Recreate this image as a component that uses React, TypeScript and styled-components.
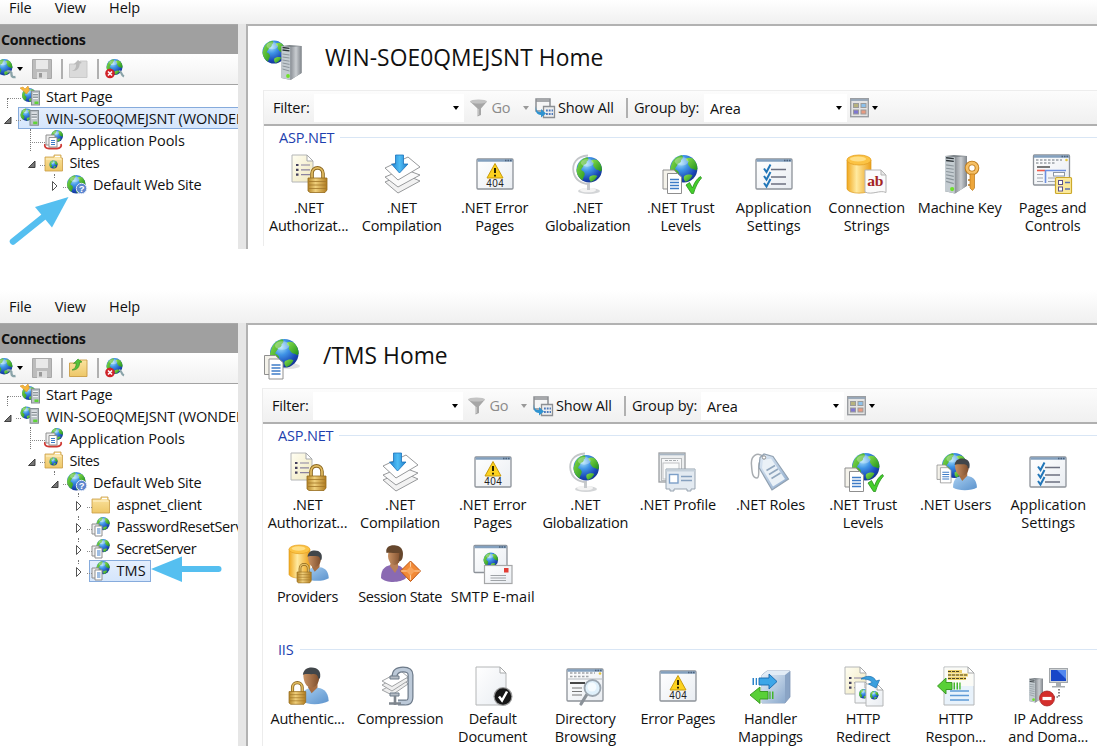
import React from "react";
import styled, { createGlobalStyle, css } from "styled-components";

const Global = createGlobalStyle`
  *, *::before, *::after { box-sizing: border-box; }
  html, body { margin: 0; padding: 0; background: #fff; overflow: hidden; }
  body { font-family: "Open Sans", "Noto Sans", sans-serif; font-size: 14.5px; letter-spacing: -0.18px; color: #111; }
  svg { display: block; flex: none; overflow: visible; }
`;

/* ---------- shared paint ---------- */

const Hidden = styled.svg`
  position: absolute;
`;

const Defs = () => (
  <Hidden width="0" height="0" aria-hidden>
    <defs>
      <radialGradient id="sea" cx="0.38" cy="0.28" r="0.8">
        <stop offset="0" stopColor="#a9e2fb" />
        <stop offset="0.35" stopColor="#3f93e6" />
        <stop offset="0.75" stopColor="#1a47b5" />
        <stop offset="1" stopColor="#123087" />
      </radialGradient>
      <linearGradient id="land" x1="0" y1="0" x2="1" y2="1">
        <stop offset="0" stopColor="#8ae04c" />
        <stop offset="1" stopColor="#1e8f1c" />
      </linearGradient>
      <linearGradient id="gold" x1="0" x2="1">
        <stop offset="0" stopColor="#b5862a" />
        <stop offset="0.4" stopColor="#f0d07c" />
        <stop offset="1" stopColor="#b07b1f" />
      </linearGradient>
      <linearGradient id="amber" x1="0" x2="1">
        <stop offset="0" stopColor="#f0a71e" />
        <stop offset="0.4" stopColor="#ffeaa0" />
        <stop offset="1" stopColor="#eca01a" />
      </linearGradient>
      <linearGradient id="steel" x1="0" x2="1">
        <stop offset="0" stopColor="#8b9096" />
        <stop offset="0.5" stopColor="#c9cdd1" />
        <stop offset="1" stopColor="#80858b" />
      </linearGradient>
      <linearGradient id="paper" x1="0" y1="0" x2="1" y2="1">
        <stop offset="0" stopColor="#ffffff" />
        <stop offset="1" stopColor="#e9edf2" />
      </linearGradient>
      <linearGradient id="cream" x1="0" y1="0" x2="1" y2="1">
        <stop offset="0" stopColor="#fffef2" />
        <stop offset="1" stopColor="#efe7bd" />
      </linearGradient>
      <linearGradient id="shirt" x1="0" y1="0" x2="1" y2="1">
        <stop offset="0" stopColor="#a9d0f2" />
        <stop offset="1" stopColor="#5b92cc" />
      </linearGradient>
      <linearGradient id="skin" x1="0" x2="1">
        <stop offset="0" stopColor="#c99264" />
        <stop offset="1" stopColor="#7d4d2c" />
      </linearGradient>
      <linearGradient id="manila" x1="0" y1="0" x2="0" y2="1">
        <stop offset="0" stopColor="#fbe3a0" />
        <stop offset="1" stopColor="#edc768" />
      </linearGradient>
      <linearGradient id="down" x1="0" x2="1">
        <stop offset="0" stopColor="#1f82cf" />
        <stop offset="0.5" stopColor="#4fbdf5" />
        <stop offset="1" stopColor="#1e7cc8" />
      </linearGradient>
      <linearGradient id="cube" x1="0" y1="0" x2="1" y2="1">
        <stop offset="0" stopColor="#e3edf7" />
        <stop offset="1" stopColor="#8ba9cc" />
      </linearGradient>
    </defs>
  </Hidden>
);

type P = { x?: number; y?: number; s?: number };
const at = ({ x = 0, y = 0, s = 1 }: P) => `translate(${x} ${y}) scale(${s})`;

/* Parts that several icons are put together from */

const Globe = (p: P) => (
  <g transform={at(p)}>
    <circle cx="10" cy="10" r="10" fill="url(#sea)" />
    <path
      d="M1 7C2 3.500 5 .9 8.600 .2 10 1.200 9.500 2.800 8 3.600 8.500 5 7 6 5.800 6.200 5.400 8 4 8.800 3.600 10.200 5.600 11 7.200 12.600 6.200 14.600 5.600 16 5 17 4.800 18.400 2 16.800.2 13.600 0 10.400Z"
      fill="url(#land)"
    />
    <path
      d="M12 2.400C13.500 1.600 15.400 1.900 16.600 2.600 18.800 4.600 20 7.200 20 10 19.500 11.600 18.200 11.500 17.600 10.400 16.400 10.400 14.600 9.600 14 8 12.800 7.400 13 5.600 13.600 5 12 4.400 11.200 3.400 12 2.400Z"
      fill="url(#land)"
    />
    <path d="M10.500 15.400C12.500 14 15.500 14 16.400 15 15 17.800 13.200 19 11.400 19.600 10 18.400 9.600 16.600 10.500 15.400Z" fill="url(#land)" />
    <ellipse cx="8.500" cy="4.600" rx="5" ry="3" fill="#fff" opacity="0.3" />
  </g>
);

const Server = (p: P) => (
  <g transform={at(p)}>
    <path d="M0 1L8 0 20 1V28L9 35 0 33Z" fill="#7e858a" />
    <path d="M0 1L9 2V35L0 33Z" fill="#c4ccd1" />
    <path d="M9 2L20 1V28L9 35Z" fill="url(#steel)" />
    <path d="M1 2.500L8 3.300M1 5L8 5.800" stroke="#2d3438" strokeWidth="1.300" />
    <path d="M1 9L8 10M1 12L8 13M1 15L8 16.200M1 18L8 19.400M1 21L8 22.600M1 24L8 26" stroke="#8b959b" strokeWidth="1" />
    <circle cx="6.500" cy="31" r="1.900" fill="#6fe02a" />
  </g>
);

const MiniServer = (p: P) => (
  <g transform={at(p)}>
    <rect x="0.500" y="0.500" width="8" height="14" fill="#bcc3c8" stroke="#858d93" />
    <path d="M2 3H7M2 5.500H7M2 8H7" stroke="#eef1f3" strokeWidth="1.200" />
    <path d="M2 4.200H7M2 6.700H7" stroke="#6d757b" strokeWidth="0.700" />
    <rect x="3.500" y="11" width="4" height="2.500" fill="#5fd336" />
  </g>
);

const Lock = (p: P) => (
  <g transform={at(p)}>
    <path d="M4 13V7.500C4 0 15 0 15 7.500V13" fill="none" stroke="#8d6820" strokeWidth="3.600" />
    <path d="M4 13V7.500C4 0 15 0 15 7.500V13" fill="none" stroke="#e2bd63" strokeWidth="1.700" />
    <path d="M0 12H19V24L17 26.500H2L0 25Z" fill="url(#gold)" stroke="#94691a" strokeWidth="0.800" />
    <path d="M1 15.500H18M1 19H18M1 22.500H18" stroke="#a2772a" strokeWidth="0.800" />
  </g>
);

const Page = ({ w = 20, h = 26, fill = "url(#paper)", ...p }: P & { w?: number; h?: number; fill?: string }) => (
  <g transform={at(p)}>
    <path d={`M0 0H${w - 6}L${w} 6V${h}H0Z`} fill={fill} stroke="#b4b6b7" strokeWidth="1" />
    <path d={`M${w - 6} 0V6H${w}Z`} fill="#fff" stroke="#a7a9aa" strokeWidth="1" />
  </g>
);

const Docs = (p: P) => (
  <g transform={at(p)}>
    <path d="M0 0H11L14 3V19H0Z" fill="#f4f2ea" stroke="#8f8f8f" />
    <path d="M4.500 3.500H14.500L18.500 7V23.500H4.500Z" fill="#fff" stroke="#8f8f8f" />
    <path d="M7 9.500H16M7 12.500H16M7 15.500H16M7 18.500H16" stroke="#3e7cc7" strokeWidth="1.400" />
  </g>
);

const Win = ({ w = 36, h = 30, ...p }: P & { w?: number; h?: number }) => (
  <g transform={at(p)}>
    <rect x="0" y="0" width={w} height={h} rx="1" fill="url(#paper)" stroke="#8d9299" strokeWidth="1.300" />
    <path d={`M.5 1.500H${w - 0.5}`} stroke="#83a0be" strokeWidth="2.600" />
    <path d={`M${w - 8} 1.500H${w - 1.5}`} stroke="#4c617b" strokeWidth="1.300" strokeDasharray="1.500 1" />
  </g>
);

const Man = (p: P) => (
  <g transform={at(p)}>
    <path d="M0 28C0 19 5 17 10 16.500 18 16 23 19 23.500 28 18 31.500 5 31.500 0 28Z" fill="url(#shirt)" />
    <path d="M6 16.500L9 21.500 14 16.500V12H7Z" fill="#a66d42" />
    <path d="M2 7C2 1 5 .5 8.500 .5 13 .5 16 3 15.500 8 15 14 12 16.500 8.500 16.500 4.500 16.500 2.500 12 2 7Z" fill="url(#skin)" />
    <path d="M1.600 6C2 1.500 5-.5 9-.5 14.500-.5 17.500 3 16 9L14.500 9C14.500 6 13 5 9 5.200 6 5.200 3 4.600 1.600 6Z" fill="#41464a" />
  </g>
);

const Cylinder = (p: P) => (
  <g transform={at(p)}>
    <path d="M0 5V34C2 39.500 22 39.500 24 34V5Z" fill="url(#amber)" stroke="#dd9b1c" strokeWidth="0.700" />
    <ellipse cx="12" cy="5" rx="12" ry="5" fill="#fbc344" stroke="#e5a021" strokeWidth="0.800" />
    <ellipse cx="11" cy="4" rx="8" ry="2.500" fill="#ffdf86" />
  </g>
);

const Warn404 = () => (
  <>
    <Win x={2} y={5} />
    <path d="M20 9.500L28 24H12Z" fill="#fcd21f" stroke="#c99b0c" strokeWidth="1" strokeLinejoin="round" />
    <path d="M20 14V19M20 20.800V22.500" stroke="#2a2300" strokeWidth="2" />
    <text x="20.300" y="33.300" textAnchor="middle" fontFamily="Liberation Sans, sans-serif" fontSize="10" letterSpacing="0.500" fill="#222">404</text>
  </>
);

const Bullets = (p: P) => (
  <g transform={at(p)}>
    <path d="M0 0H2.500M0 4.800H2.500M0 9.600H2.500" stroke="#45415e" strokeWidth="2.200" />
    <path d="M5 0H14M5 4.800H14M5 9.600H14" stroke="#8a829f" strokeWidth="1.200" />
  </g>
);

/* ---------- 40 x 40 feature icons ---------- */

const glyphs: Record<string, React.ReactNode> = {
  authorization: (
    <>
      <Page x={3} y={1} w={21} h={27} fill="url(#cream)" />
      <Bullets x={7} y={11} />
      <Lock x={19} y={12} />
    </>
  ),
  compilation: (
    <>
      <path d="M3 28L22 20 38 27 16 39Z" fill="#f2f2f2" stroke="#97999b" />
      <path d="M3 23L22 15 38 21 16 33Z" fill="#fafafa" stroke="#97999b" />
      <path d="M3 14L26 3 38 13 16 26Z" fill="#fff" stroke="#97999b" />
      <path d="M13.500 1H21.500V10H26L17.500 19 9.500 10H13.500Z" fill="url(#down)" stroke="#1c74bd" strokeWidth="0.800" />
    </>
  ),
  error: <Warn404 />,
  globalization: (
    <>
      <ellipse cx="21" cy="37" rx="11" ry="3" fill="#d3d5d7" />
      <ellipse cx="20" cy="36" rx="8" ry="2.300" fill="#f3f3f3" />
      <path d="M19 29H22V36H19Z" fill="#c6c9cc" />
      <path d="M20 1.500C8 2 4 10 5.500 18 7 25.500 13 30 21 30" fill="none" stroke="#c3c6c9" strokeWidth="1.800" />
      <Globe x={8.500} y={3} s={1.270} />
    </>
  ),
  trust: (
    <>
      <Globe x={9} y={1} s={1.370} />
      <Docs x={2} y={16} />
      <path d="M25 31L28.500 28.500 31.500 34C33 29 36 24.500 39.500 22.500L40.500 24C37 27.500 34 34 32.500 39.500H30.500Z" fill="#45ce2c" stroke="#27911a" strokeWidth="0.800" />
    </>
  ),
  settings: (
    <>
      <Win x={2} y={5} />
      <path d="M17 15.500H32M17 23H32M17 30H32" stroke="#6c7080" strokeWidth="1.300" />
      <path d="M10 14.500L12.500 18 16.500 10.500M10 22L12.500 25.500 16.500 18M10 29L12.500 32.500 16.500 25" fill="none" stroke="#2176b8" strokeWidth="2" />
    </>
  ),
  strings: (
    <>
      <Cylinder x={0} y={1} />
      <path d="M18 16H34L39 21V38.500C33 35.500 25 41.500 18 38Z" fill="#fbfbfb" stroke="#b5b5b5" />
      <path d="M34 16V21H39Z" fill="#e9e9e9" stroke="#b5b5b5" />
      <text x="28.300" y="32" textAnchor="middle" fontFamily="Liberation Serif, serif" fontWeight="700" fontSize="15.500" fill="#a32525">ab</text>
    </>
  ),
  machinekey: (
    <>
      <Server x={5} y={1} s={1.100} />
      <circle cx="32" cy="14" r="5" fill="none" stroke="#b97719" strokeWidth="4.600" />
      <circle cx="32" cy="14" r="5" fill="none" stroke="#f6c065" strokeWidth="2.800" />
      <path d="M30 20H34.500V34L32.500 36.500 30 34Z" fill="#eda63b" stroke="#b97719" strokeWidth="0.700" />
      <path d="M30 26H28M30 31H28" stroke="#b97719" strokeWidth="1.600" />
    </>
  ),
  pages: (
    <>
      <Win x={0.500} y={1} w={36} h={30} />
      <path d="M3 6H29M3 9H22" stroke="#9aa0a6" strokeWidth="1.600" strokeDasharray="2.500 1.500" />
      <circle cx="33.500" cy="6" r="1.300" fill="#e5c53a" />
      <path d="M4 13H17" stroke="#333" strokeWidth="1.300" />
      <path d="M4 16.500H12" stroke="#ef5a4a" strokeWidth="1.600" />
      <path d="M12 16.500H33M12.500 16V29" stroke="#6c8fe0" strokeWidth="1.600" />
      <path d="M4 20.500H10M4 24H10M4 27.500H10M15 24H22M15 27.500H22" stroke="#a3a8b0" strokeWidth="1.200" />
      <rect x="20.500" y="18.500" width="11" height="3.500" fill="#fff" stroke="#8b96a5" />
      <rect x="22.500" y="23.500" width="16" height="16" rx="1" fill="#fbe99a" stroke="#cda92b" strokeWidth="1.200" />
      <rect x="25.500" y="26.500" width="4" height="4" fill="#fff" stroke="#5c5088" />
      <rect x="25.500" y="33" width="4" height="4" fill="#fff" stroke="#5c5088" />
      <path d="M32 28.500H37M32 35H37" stroke="#5c6fb0" strokeWidth="1.300" />
    </>
  ),
  profile: (
    <>
      <rect x="1" y="1" width="26" height="29" fill="#eceeef" stroke="#9a9da0" strokeWidth="1.300" />
      <path d="M1 2.500H27" stroke="#a8b6c4" strokeWidth="1.600" />
      <rect x="3.500" y="6.500" width="20" height="22" fill="#f6f7f8" stroke="#b6b9bb" />
      <path d="M7 8.500H20" stroke="#a9adb0" strokeWidth="1.200" strokeDasharray="3 1" />
      <rect x="5" y="11" width="16" height="16" fill="#fafbfb" stroke="#bfc2c4" />
      <path d="M8 17H37V37H33V39H29V37H16V39H12V37H8Z" fill="#e3eaf1" stroke="#97a3af" />
      <path d="M8 18.500H37" stroke="#c5d0da" strokeWidth="2" />
      <rect x="11.500" y="22.500" width="8.500" height="8.500" fill="#fff" stroke="#7c9fc8" strokeWidth="1.400" />
      <path d="M23 24.500H34M23 28.500H34" stroke="#86a0be" strokeWidth="1.500" />
    </>
  ),
  roles: (
    <>
      <path d="M14 5C7-1 .5 4 1.500 13 2 21 2.500 26 7 26 10 25.500 8 19 9 12 10 7 13 4 16 4" fill="none" stroke="#a9adb1" strokeWidth="1.500" />
      <path d="M10 5.500L14 2 23 4.500 38.500 27 22 38 9 15.500Z" fill="url(#cube)" stroke="#91a1b1" strokeWidth="1.200" />
      <path d="M13 8L21 6.500 35 27 23 34.500 12 16Z" fill="#eaf1f7" />
      <path d="M16.500 18.500L25 13.500M19 22.500L28 17M21.500 26.500L30.500 21" stroke="#91a7be" strokeWidth="1.600" />
      <circle cx="14" cy="5.500" r="1.700" fill="#fff" stroke="#8d8d8d" />
    </>
  ),
  users: (
    <>
      <Globe x={6} y={1} s={1.250} />
      <Docs x={1} y={13} s={0.760} />
      <Man x={17} y={7} s={1.020} />
    </>
  ),
  providers: (
    <>
      <Cylinder x={1} y={1} s={0.870} />
      <Man x={18} y={7} s={0.970} />
      <Lock x={9} y={19} s={0.750} />
    </>
  ),
  session: (
    <>
      <path d="M1 34C1 24 6 21.500 13 20.500 21 21 25 24 26 34 21 39 6 39.500 1 34Z" fill="#8a6ab2" />
      <path d="M11 17H18V24L15 29 10 22Z" fill="#b98058" />
      <ellipse cx="14.500" cy="12" rx="6.500" ry="9" fill="url(#skin)" />
      <path d="M6.500 9C5 2.500 11 .5 16 1.500 22.500 2.500 24 8 22.500 14 21.500 17 20 17.500 18.500 17L19.500 9C15 9.500 9 8 6.500 9Z" fill="#66472d" />
      <path d="M30.500 17L40.500 27 30.500 37.500 20.500 27Z" fill="#f28a37" stroke="#bf5512" />
      <path d="M30.500 18V36M21 27H40" stroke="#ffd2a4" strokeWidth="1.100" />
      <path d="M30.500 22.500L35 27 30.500 31.500 26 27Z" fill="#f8a55d" />
    </>
  ),
  smtp: (
    <>
      <Win x={1} y={1.500} w={33} h={27} />
      <Globe x={10.500} y={8.500} s={0.730} />
      <rect x="11.500" y="21.500" width="27.500" height="18" fill="url(#paper)" stroke="#a6a7a8" strokeWidth="1.200" />
      <rect x="31" y="24" width="4.500" height="4.500" fill="#e23d35" />
      <path d="M17.500 31.500H33M17.500 34H33M17.500 36.500H33" stroke="#9fa3a7" strokeWidth="1" />
    </>
  ),
  authentication: (
    <>
      <Man x={13} y={2} s={1.180} />
      <Lock x={1} y={15} s={0.880} />
    </>
  ),
  compression: (
    <>
      <path d="M2 24L23 13 28 18 12 29Z" fill="#eee" stroke="#a2a4a6" />
      <path d="M2 19L22 8 29 14 12 25Z" fill="#eee" stroke="#a2a4a6" />
      <path d="M2 15L21 5 28 11 12 20.500Z" fill="#fff" stroke="#a2a4a6" />
      <path d="M14.500 11C14.500 4.500 19 3.500 23 3.500 28 3.500 30.500 5 30.500 9V31C30.500 36 28 37 24 36.500L18 36.500" fill="none" stroke="#6d7a89" strokeWidth="6" />
      <path d="M14.500 11C14.500 4.500 19 3.500 23 3.500 28 3.500 30.500 5 30.500 9V31C30.500 36 28 37 24 36.500L18 36.500" fill="none" stroke="#bcc9d8" strokeWidth="3.600" />
      <path d="M10 10H19V13H10ZM10 27H19V30H10Z" fill="#b6bdc5" stroke="#6d7a89" />
      <path d="M15 30V39M9 37.500H21" stroke="#7f868e" strokeWidth="2.600" />
    </>
  ),
  defaultdoc: (
    <>
      <Page x={3} y={1} w={30} h={38} />
      <circle cx="30" cy="30.500" r="9.500" fill="#9b9b9b" />
      <circle cx="30" cy="30.500" r="8.300" fill="#151515" />
      <path d="M26 30.500L29 34.500 34 25.500" fill="none" stroke="#fff" strokeWidth="2.500" />
    </>
  ),
  directory: (
    <>
      <Win x={2} y={3} w={36} h={32} />
      <path d="M5 7H30M5 10.500H25" stroke="#a0a4a9" strokeWidth="1.600" strokeDasharray="2.500 1.500" />
      <circle cx="35" cy="7.500" r="1.300" fill="#e5c53a" />
      <path d="M2 13H38" stroke="#b5bac0" />
      <path d="M5 17H20" stroke="#333" strokeWidth="1.800" />
      <path d="M7 22H17M7 25.500H17M7 29H17" stroke="#777" strokeWidth="1.200" />
      <path d="M21.500 29L16 38" stroke="#8b9299" strokeWidth="3.200" strokeLinecap="round" />
      <circle cx="27.500" cy="22" r="8" fill="#dff0fb" stroke="#9ba5af" strokeWidth="1.800" />
      <circle cx="27" cy="21" r="4.500" fill="#fff" opacity="0.700" />
    </>
  ),
  handler: (
    <>
      <path d="M12 9L17 5H40V31L35 37H12Z" fill="#8aa4c5" stroke="#7f96b5" strokeWidth="0.800" />
      <path d="M12 9H35V37H12Z" fill="url(#cube)" />
      <path d="M12 9L17 5H40L35 9Z" fill="#e2ecf6" />
      <path d="M9 12H19V8L27 15.500 19 23V19H9Z" fill="#3da6e8" stroke="#1567ad" strokeWidth="0.900" />
      <path d="M2.500 12H4V19H2.500ZM5.700 12H7V19H5.700Z" fill="#2a82c9" />
      <path d="M18 25.500H10V21L0 29 10 37.500V33H18Z" fill="#59d038" stroke="#32931c" strokeWidth="0.900" />
      <path d="M19.300 25.500H20.600V33H19.300ZM22 25.500H23.500V33H22Z" fill="#43b52a" />
    </>
  ),
  redirect: (
    <>
      <Page x={2} y={1} w={21} h={27} fill="url(#cream)" />
      <Bullets x={6} y={12} />
      <Page x={12} y={16} w={16} h={21} />
      <Globe x={16} y={23} s={0.480} />
      <Page x={23} y={18} w={17} h={22} />
      <Globe x={27} y={25} s={0.420} />
      <path d="M18 13C24 8.500 31 10 33 15L36.500 14 33 22 25.500 18 29 16.500C27.500 13.500 23 13 18 13Z" fill="#3ba0de" stroke="#1a6eae" strokeWidth="0.700" />
    </>
  ),
  response: (
    <>
      <Page x={8} y={1} w={30} h={38} fill="#e8f2fb" />
      <path d="M8.500 1.500H32L37.500 7V20H8.500Z" fill="#fbfbf6" />
      <path d="M32 1V7H38Z" fill="#fff" stroke="#a7a9aa" />
      <path d="M12 5.500H26M12 9H32M12 12.500H30" stroke="#ecd06a" strokeWidth="2.800" />
      <path d="M12 5.500H24M12 9H32M12 12.500H30" stroke="#4c4526" strokeWidth="1" strokeDasharray="3 1" />
      <path d="M14 25H33M14 29.500H33M14 34H33" stroke="#5e9ad6" strokeWidth="1.500" />
      <path d="M16 16.500H10V12L1.500 20 10 28V23.500H16Z" fill="#59d038" stroke="#32931c" strokeWidth="0.900" />
      <path d="M17.500 16.500H19V23.500H17.500ZM20.500 16.500H22V23.500H20.500ZM23.300 16.500H24.600V23.500H23.300Z" fill="#43b52a" />
    </>
  ),
  ipdomain: (
    <>
      <Server x={1} y={12} s={0.700} />
      <rect x="21.500" y="2.500" width="18" height="14" fill="#cfd3d6" stroke="#a3a7ab" />
      <rect x="23" y="4" width="15" height="11" fill="#1746c8" />
      <path d="M29 4H38V13Z" fill="#5287ef" />
      <path d="M28 17H33V20H37V21.500H24V20H28Z" fill="#a8adb1" />
      <path d="M31 23V31H26" fill="none" stroke="#333" strokeWidth="1.200" strokeDasharray="1.500 1.500" />
      <circle cx="19" cy="32.500" r="7.500" fill="#d42f2c" stroke="#9f1d1c" strokeWidth="0.700" />
      <path d="M14.500 32.500H23.500" stroke="#fff" strokeWidth="3.200" />
    </>
  ),
  site: (
    <>
      <ellipse cx="27" cy="27" rx="11" ry="3" fill="#000" opacity="0.120" />
      <Globe x={8} y={0} s={1.430} />
      <Docs x={2.500} y={16.500} />
    </>
  ),
  server: (
    <>
      <Globe x={0.500} y={0.500} s={1.150} />
      <Server x={19.500} y={5} s={1} />
    </>
  ),
};

const Feature = ({ name }: { name: string }) => (
  <svg width="40" height="40" viewBox="0 0 40 40">{glyphs[name]}</svg>
);

/* ---------- 20 x 20 tree and toolbar icons ---------- */

const Folder = () => (
  <>
    <path d="M1 4H10V2H17V5H18.500V18H1Z" fill="url(#manila)" stroke="#c99c45" strokeWidth="0.800" />
    <path d="M11 3.500H16" stroke="#fff" strokeWidth="1.200" />
    <path d="M2 6H17.500" stroke="#fff3ce" strokeWidth="1" />
  </>
);

const small: Record<string, React.ReactNode> = {
  start: (
    <>
      <Globe x={2} y={2} s={0.700} />
      <path d="M0 2L3 1 5 3 8 0 9.500 4 6.500 8 3 4.500Z" fill="#f6b53a" stroke="#d38a16" strokeWidth="0.500" />
      <MiniServer x={11} y={4.500} />
    </>
  ),
  server: (
    <>
      <Globe x={0.500} y={0.500} s={0.620} />
      <MiniServer x={9.500} y={2} s={1.050} />
    </>
  ),
  pools: (
    <>
      <Globe x={7} y={0} s={0.600} />
      <path d="M1 14C0 17 2 18.500 5 18.500H13C16 18.500 18 16.500 17 14" fill="none" stroke="#cf3a35" strokeWidth="1.800" />
      <path d="M2 5H11V15H2Z" fill="#eee" stroke="#909090" />
      <path d="M5 7.500H13V17H5Z" fill="#fff" stroke="#909090" />
      <path d="M7 10.500H11M7 12.500H11M7 14.500H11" stroke="#3e7cc7" />
    </>
  ),
  sites: (
    <>
      <Folder />
      <Globe x={5.500} y={7.500} s={0.400} />
    </>
  ),
  web: (
    <>
      <Globe x={0} y={0} s={0.920} />
      <circle cx="14.500" cy="13.500" r="5.200" fill="#5d86cf" stroke="#dfe7f5" strokeWidth="1" />
      <text x="14.500" y="17" textAnchor="middle" fontFamily="Liberation Sans, sans-serif" fontWeight="700" fontSize="9.500" fill="#fff">?</text>
    </>
  ),
  folder: <Folder />,
  app: (
    <>
      <Globe x={5.500} y={0} s={0.660} />
      <path d="M1 7H8V17H1Z" fill="#eee" stroke="#8d8d8d" />
      <path d="M4 9H11V19H4Z" fill="#fff" stroke="#8d8d8d" />
      <path d="M6 12H9.500M6 14H9.500M6 16H9.500" stroke="#3e7cc7" />
    </>
  ),
  connect: (
    <>
      <Globe x={0} y={0} s={0.820} />
      <path d="M11 13C13 11 16 13 15.500 15.500 15.500 17.500 17 18.500 19.500 18" fill="none" stroke="#8ba4a9" strokeWidth="2.400" />
    </>
  ),
  disconnect: (
    <>
      <Globe x={1.500} y={0} s={0.800} />
      <path d="M14 12C17 12 15.500 16 19 17.500" fill="none" stroke="#8ba4a9" strokeWidth="2.200" />
      <circle cx="5" cy="14.500" r="4.800" fill="#cf2228" />
      <path d="M3 12.500L7 16.500M7 12.500L3 16.500" stroke="#fff" strokeWidth="1.600" />
    </>
  ),
  floppy: (
    <>
      <path d="M0.500 0.500H19.500V19.500H0.500Z" fill="#bcbcbc" stroke="#a8a8a8" />
      <rect x="4" y="1" width="12" height="9" fill="#e9e9e9" />
      <rect x="5" y="13" width="10" height="7" fill="#dedede" />
      <rect x="7" y="14" width="3" height="4.500" fill="#9a9a9a" />
    </>
  ),
  up: (
    <>
      <path d="M0.500 5H11V2H18V18.500H0.500Z" fill="url(#manila)" stroke="#c99c45" strokeWidth="0.900" />
      <path d="M3 12C6 11 7.500 8 7 5L4.500 5.500 9 1 13 4 10.500 4.500C11 8.500 8 12.500 3 12Z" fill="#53c13b" stroke="#2f8c1d" strokeWidth="0.600" />
    </>
  ),
  upOff: (
    <>
      <path d="M0.500 5H11V2H18V18.500H0.500Z" fill="#dadada" stroke="#c6c6c6" strokeWidth="0.900" />
      <path d="M3 12C6 11 7.500 8 7 5L4.500 5.500 9 1 13 4 10.500 4.500C11 8.500 8 12.500 3 12Z" fill="#bababa" />
    </>
  ),
  funnel: (
    <>
      <path d="M1 3.500H18L12 10.500V17L8.500 18.500V10.500Z" fill="#a6a6a6" />
      <ellipse cx="9.500" cy="3.500" rx="8.500" ry="2" fill="#c3c3c3" />
      <path d="M9 11V17" stroke="#d5d5d5" strokeWidth="1.200" />
    </>
  ),
  showall: (
    <>
      <path d="M1 1H15V13H1Z" fill="#f6f6f6" stroke="#8c8f93" strokeWidth="1.500" />
      <path d="M1 3H15" stroke="#8c8f93" strokeWidth="1.500" />
      <path d="M8.500 8.500H19.500V19.500H8.500Z" fill="#eee" stroke="#8c8f93" strokeWidth="1.300" />
      <path d="M11 12.500H18M11 16H18" stroke="#4d7abb" strokeWidth="1.800" strokeDasharray="1.800 1" />
      <path d="M1 8C1 12 2 14 6 14V11L11 15.500 6 19.500V17C1.500 17 0 13 1 8Z" fill="#2f93d0" />
    </>
  ),
  view: (
    <>
      <rect x="0.700" y="0.700" width="17.600" height="18" fill="#e4e4e4" stroke="#9b9ea2" strokeWidth="1.400" />
      <path d="M1 2H18" stroke="#93a3b5" strokeWidth="1.800" />
      <rect x="3.500" y="5.500" width="5" height="4" fill="#b6b27e" stroke="#9a9a9a" />
      <rect x="11" y="5.500" width="5" height="4" fill="#8cc0ea" stroke="#9a9a9a" />
      <rect x="3.500" y="12" width="5" height="4" fill="#7f77d2" stroke="#9a9a9a" />
      <rect x="11" y="12" width="5" height="4" fill="#e89a80" stroke="#9a9a9a" />
    </>
  ),
};

const Small = ({ name }: { name: string }) => (
  <svg width="20" height="20" viewBox="0 0 20 20">{small[name]}</svg>
);

/* ---------- layout ---------- */

const Screen = styled.div`
  display: flex;
  flex-direction: column;
  gap: 41px;
  width: 1097px;
  height: 746px;
  background: #fff;
`;

const Manager = styled.section<{ $height: number }>`
  position: relative;
  display: flex;
  flex-direction: column;
  flex: none;
  height: ${(p) => p.$height}px;
  overflow: hidden;
`;

const MenuBar = styled.nav<{ $height: number }>`
  display: flex;
  flex: none;
  align-items: flex-end;
  gap: 23px;
  height: ${(p) => p.$height}px;
  padding: 0 0 8px 9px;
  line-height: 17px;
  letter-spacing: -0.08px;
  background: linear-gradient(#fff, #f0f0f0);
`;

const MenuItem = styled.span``;

const Workspace = styled.div`
  display: flex;
  flex: 1;
  min-height: 0;
  background: #e6e6e6;
`;

const Sidebar = styled.aside`
  width: 238px;
  flex: none;
  overflow: hidden;
  background: #fff;
`;

const SideTitle = styled.h2`
  height: 30px;
  margin: 0;
  padding-left: 1px;
  border-top: 1px solid #a9a9a9;
  background: #a0a0a0;
  font-size: 14.3px;
  font-weight: 700;
  letter-spacing: -0.35px;
  line-height: 30px;
`;

const SideTools = styled.div`
  display: flex;
  align-items: center;
  height: 31px;
  border-bottom: 1px solid #a3a3a3;
  background: linear-gradient(#fff, #f1f1f1);
  & > svg:first-child { margin-left: -4px; }
`;

const Caret = styled.i<{ $dim?: boolean; $l?: number; $r?: number }>`
  flex: none;
  width: 0;
  height: 0;
  margin: 0 ${(p) => p.$r ?? 0}px 0 ${(p) => p.$l ?? 0}px;
  border: 3.5px solid transparent;
  border-top: 4px solid ${(p) => (p.$dim ? "#999" : "#000")};
  border-bottom: 0;
`;

const Divider = styled.i<{ $l: number; $r: number }>`
  flex: none;
  width: 2px;
  height: 20px;
  margin: 0 ${(p) => p.$r}px 0 ${(p) => p.$l}px;
  background: #b0b0b0;
`;

const Tree = styled.ul<{ $top: number }>`
  margin: ${(p) => p.$top}px 0 0;
  padding: 0;
  list-style: none;
`;

const TreeRow = styled.li<{ $depth: number; $h: number }>`
  position: relative;
  display: flex;
  align-items: center;
  height: ${(p) => p.$h}px;
  padding-left: ${(p) => 3 + p.$depth * 23.5}px;
  white-space: nowrap;
`;

const Expander = styled.span`
  display: flex;
  flex: none;
  width: 15px;
  padding-top: 3px;
`;

const Node = styled.span<{ $on?: boolean; $wide?: boolean; $ls?: number }>`
  position: relative;
  display: flex;
  align-items: center;
  gap: 6px;
  flex: ${(p) => (p.$wide ? "1 0 auto" : "none")};
  height: 22px;
  padding: 0 4px 0 1px;
  border: 1px solid transparent;
  letter-spacing: ${(p) => p.$ls ?? -0.18}px;
  ${(p) =>
    p.$on &&
    css`
      border-color: #86abdc;
      background: linear-gradient(#e4eefd, #d5e6fc);
    `}
`;

const Lead = styled.i<{ $w: number }>`
  position: absolute;
  right: calc(100% - 2px);
  top: 12px;
  width: ${(p) => p.$w}px;
  border-top: 1px dotted #8a8a8a;
`;

const Trunk = styled.i<{ $x: number; $top: number; $h: number }>`
  position: absolute;
  left: ${(p) => p.$x}px;
  top: ${(p) => p.$top}px;
  height: ${(p) => p.$h}px;
  border-left: 1px dotted #777;
`;

const Content = styled.main`
  flex: 1;
  min-width: 0;
  margin-left: 8px;
  border: solid #b2b2b2;
  border-width: 2px 0 0 2px;
  background: #fff;
  padding-left: 14px;
`;

const PageHead = styled.header<{ $gap: number; $h: number }>`
  display: flex;
  align-items: center;
  gap: ${(p) => p.$gap}px;
  height: ${(p) => p.$h}px;
  padding-top: 4px;
`;

const PageTitle = styled.h1`
  margin: 0 0 6px;
  font-size: 22.8px;
  font-weight: 400;
  letter-spacing: 0.05px;
  white-space: nowrap;
`;

const Board = styled.div<{ $l: number }>`
  margin-left: ${(p) => p.$l}px;
  border-left: 1px solid #ececec;
`;

const FilterBar = styled.div`
  display: flex;
  align-items: center;
  height: 36px;
  border-top: 1px solid #ededed;
  border-bottom: 2px solid #b0b0b0;
  background: linear-gradient(#fcfcfc, #f0f0f0);
  white-space: nowrap;
`;

const BarText = styled.span<{ $w: number; $dim?: boolean; $pad?: number }>`
  flex: none;
  width: ${(p) => p.$w}px;
  padding-left: ${(p) => p.$pad ?? 0}px;
  color: ${(p) => (p.$dim ? "#8b8b8b" : "#111")};
`;

const Combo = styled.span<{ $w: number }>`
  display: flex;
  flex: none;
  align-items: center;
  width: ${(p) => p.$w}px;
  height: 28px;
  padding: 1px 5px 0 6px;
  background: #fff;
  & > i { margin-left: auto; }
`;

const Gap = styled.i<{ $w: number }>`
  flex: none;
  width: ${(p) => p.$w}px;
`;

const Group = styled.section<{ $h?: number; $top: number }>`
  height: ${(p) => (p.$h ? p.$h + "px" : "auto")};
  padding-top: ${(p) => p.$top}px;
`;

const GroupTitle = styled.h3`
  display: flex;
  align-items: center;
  gap: 6px;
  height: 20px;
  margin: 0;
  padding-left: 15px;
  font-size: 14.5px;
  font-weight: 400;
  color: #1e3fae;
  &::after { content: ""; flex: 1; height: 1px; background: #d9e6f5; }
`;

const Grid = styled.div<{ $pitch: number }>`
  display: grid;
  grid-template-columns: repeat(9, ${(p) => p.$pitch}px);
  grid-auto-rows: 92px;
  padding-top: 7px;
  margin-left: -1.8px;
`;

const Tile = styled.figure`
  display: flex;
  flex-direction: column;
  align-items: center;
  margin: 0;
`;

const TileLabel = styled.figcaption<{ $gap: number; $ls?: number }>`
  margin-top: ${(p) => p.$gap}px;
  line-height: 18.4px;
  letter-spacing: ${(p) => p.$ls ?? -0.18}px;
  text-align: center;
  white-space: pre;
`;

const Pointer = styled.svg`
  position: absolute;
  left: 0;
  top: 0;
`;

/* ---------- data ---------- */

type NodeData = { d: number; icon: string; label: string; open?: boolean; on?: boolean; wide?: boolean; ls?: number };
type TileData = [icon: string, label: string, spacing?: number];

const firstTree = (): NodeData[] => [
  { d: 0, icon: "start", label: "Start Page", ls: -0.25 },
  { d: 0, icon: "server", label: "WIN-SOE0QMEJSNT (WONDERLAND)", open: true, on: true, wide: true },
  { d: 1, icon: "pools", label: "Application Pools", ls: -0.05 },
  { d: 1, icon: "sites", label: "Sites", open: true, ls: -0.4 },
  { d: 2, icon: "web", label: "Default Web Site", open: false, ls: -0.24 },
];

const secondTree = (): NodeData[] => [
  ...firstTree().map((n) => ({ ...n, on: false, open: n.icon === "web" ? true : n.open })),
  { d: 3, icon: "folder", label: "aspnet_client", open: false, ls: -0.28 },
  { d: 3, icon: "app", label: "PasswordResetServer", open: false, ls: -0.36 },
  { d: 3, icon: "app", label: "SecretServer", open: false, ls: -0.5 },
  { d: 3, icon: "app", label: "TMS", open: false, on: true, ls: 0.1 },
];

const serverTiles: TileData[] = [
  ["authorization", ".NET\nAuthorizat..."],
  ["compilation", ".NET\nCompilation"],
  ["error", ".NET Error\nPages"],
  ["globalization", ".NET\nGlobalization", -0.22],
  ["trust", ".NET Trust\nLevels"],
  ["settings", "Application\nSettings", 0],
  ["strings", "Connection\nStrings", -0.05],
  ["machinekey", "Machine Key"],
  ["pages", "Pages and\nControls"],
];

const appTiles: TileData[] = [
  ["authorization", ".NET\nAuthorizat..."],
  ["compilation", ".NET\nCompilation"],
  ["error", ".NET Error\nPages"],
  ["globalization", ".NET\nGlobalization", -0.22],
  ["profile", ".NET Profile"],
  ["roles", ".NET Roles"],
  ["trust", ".NET Trust\nLevels"],
  ["users", ".NET Users"],
  ["settings", "Application\nSettings", 0],
  ["providers", "Providers", -0.35],
  ["session", "Session State", -0.45],
  ["smtp", "SMTP E-mail", 0.1],
];

const iisTiles: TileData[] = [
  ["authentication", "Authentic..."],
  ["compression", "Compression", -0.25],
  ["defaultdoc", "Default\nDocument"],
  ["directory", "Directory\nBrowsing"],
  ["error", "Error Pages", -0.3],
  ["handler", "Handler\nMappings"],
  ["redirect", "HTTP\nRedirect"],
  ["response", "HTTP\nRespon..."],
  ["ipdomain", "IP Address\nand Doma..."],
];

/* ---------- pieces ---------- */

const ExpandMark = ({ open }: { open: boolean }) => (
  <svg width="10" height="10" viewBox="0 0 10 10">
    {open ? (
      <path d="M8 2V8.500H1.500Z" fill="#777" stroke="#333" strokeWidth="0.900" />
    ) : (
      <path d="M2.500 0.500V9.500L7 5Z" fill="#fff" stroke="#555" strokeWidth="1" />
    )}
  </svg>
);

const Connections = ({ nodes, upOn, pitch, top }: { nodes: NodeData[]; upOn: boolean; pitch: number; top: number }) => (
  <Sidebar>
    <SideTitle>Connections</SideTitle>
    <SideTools>
      <Small name="connect" />
      <Caret $l={1} $r={9} />
      <Small name="floppy" />
      <Divider $l={9} $r={6} />
      <Small name={upOn ? "up" : "upOff"} />
      <Divider $l={8} $r={6} />
      <Small name="disconnect" />
    </SideTools>
    <Tree $top={top}>
      {nodes.map((n) => (
        <TreeRow key={n.label} $depth={n.d} $h={pitch}>
          {n.icon === "start" && <Trunk $x={7} $top={13} $h={10} />}
          {n.icon === "pools" && <Trunk $x={30} $top={0} $h={22} />}
          {n.d > 1 && <Trunk $x={7 + n.d * 23.5} $top={0} $h={4} />}
          <Expander>{n.open !== undefined && <ExpandMark open={n.open} />}</Expander>
          <Node $on={n.on} $wide={n.wide} $ls={n.ls}>
            <Lead $w={n.open === undefined ? 13 : 5} />
            <Small name={n.icon} />
            {n.label}
          </Node>
        </TreeRow>
      ))}
    </Tree>
  </Sidebar>
);

const Filter = ({ tight }: { tight?: boolean }) => (
  <FilterBar>
    <BarText $w={50} $pad={9}>Filter:</BarText>
    <Combo $w={150}>
      <Caret />
    </Combo>
    <Gap $w={tight ? 4 : 5} />
    <Small name="funnel" />
    <Gap $w={2.5} />
    <BarText $w={31} $dim>Go</BarText>
    <Caret $dim $r={6.5} />
    <Small name="showall" />
    <Gap $w={3} />
    <BarText $w={58}>Show All</BarText>
    <Divider $l={10} $r={6} />
    <BarText $w={tight ? 69 : 70}>Group by:</BarText>
    <Combo $w={143}>
      Area
      <Caret />
    </Combo>
    <Gap $w={3} />
    <Small name="view" />
    <Caret $l={2} />
  </FilterBar>
);

const Features = ({
  title,
  tiles,
  pitch,
  height,
  top = 0,
  labelGap = 4,
}: {
  title: string;
  tiles: TileData[];
  pitch: number;
  height?: number;
  top?: number;
  labelGap?: number;
}) => (
  <Group $h={height} $top={top}>
    <GroupTitle>{title}</GroupTitle>
    <Grid $pitch={pitch}>
      {tiles.map(([icon, label, spacing]) => (
        <Tile key={label}>
          <Feature name={icon} />
          <TileLabel $gap={labelGap} $ls={spacing}>{label}</TileLabel>
        </Tile>
      ))}
    </Grid>
  </Group>
);

const Menu = ({ height }: { height: number }) => (
  <MenuBar $height={height}>
    <MenuItem>File</MenuItem>
    <MenuItem>View</MenuItem>
    <MenuItem>Help</MenuItem>
  </MenuBar>
);

export default function App() {
  return (
    <>
      <Global />
      <Defs />
      <Screen>
        <Manager $height={249}>
          <Menu height={24} />
          <Workspace>
            <Connections nodes={firstTree()} upOn={false} pitch={22.2} top={0} />
            <Content>
              <PageHead $gap={23} $h={64}>
                <Feature name="server" />
                <PageTitle>WIN-SOE0QMEJSNT Home</PageTitle>
              </PageHead>
              <Board $l={1}>
                <Filter />
                <Features title="ASP.NET" tiles={serverTiles} pitch={93} top={1} labelGap={5} />
              </Board>
            </Content>
          </Workspace>
          <Pointer width="80" height="249" viewBox="0 0 80 249">
            <path d="M13 241.500L46 215" stroke="#55bff0" strokeWidth="6.500" strokeLinecap="round" />
            <path d="M68.500 197L35 207 52 227.500Z" fill="#55bff0" />
          </Pointer>
        </Manager>
        <Manager $height={456}>
          <Menu height={33} />
          <Workspace>
            <Connections nodes={secondTree()} upOn pitch={22.1} top={-1} />
            <Content>
              <PageHead $gap={21} $h={63}>
                <Feature name="site" />
                <PageTitle>/TMS Home</PageTitle>
              </PageHead>
              <Board $l={0}>
                <Filter tight />
                <Features title="ASP.NET" tiles={appTiles} pitch={92.6} height={215} top={1} />
                <Features title="IIS" tiles={iisTiles} pitch={92.6} />
              </Board>
            </Content>
          </Workspace>
          <Pointer width="230" height="320" viewBox="0 0 230 320">
            <path d="M180 279H218.500" stroke="#55bff0" strokeWidth="6" strokeLinecap="round" />
            <path d="M151 279L182 266.500V292Z" fill="#55bff0" />
          </Pointer>
        </Manager>
      </Screen>
    </>
  );
}
